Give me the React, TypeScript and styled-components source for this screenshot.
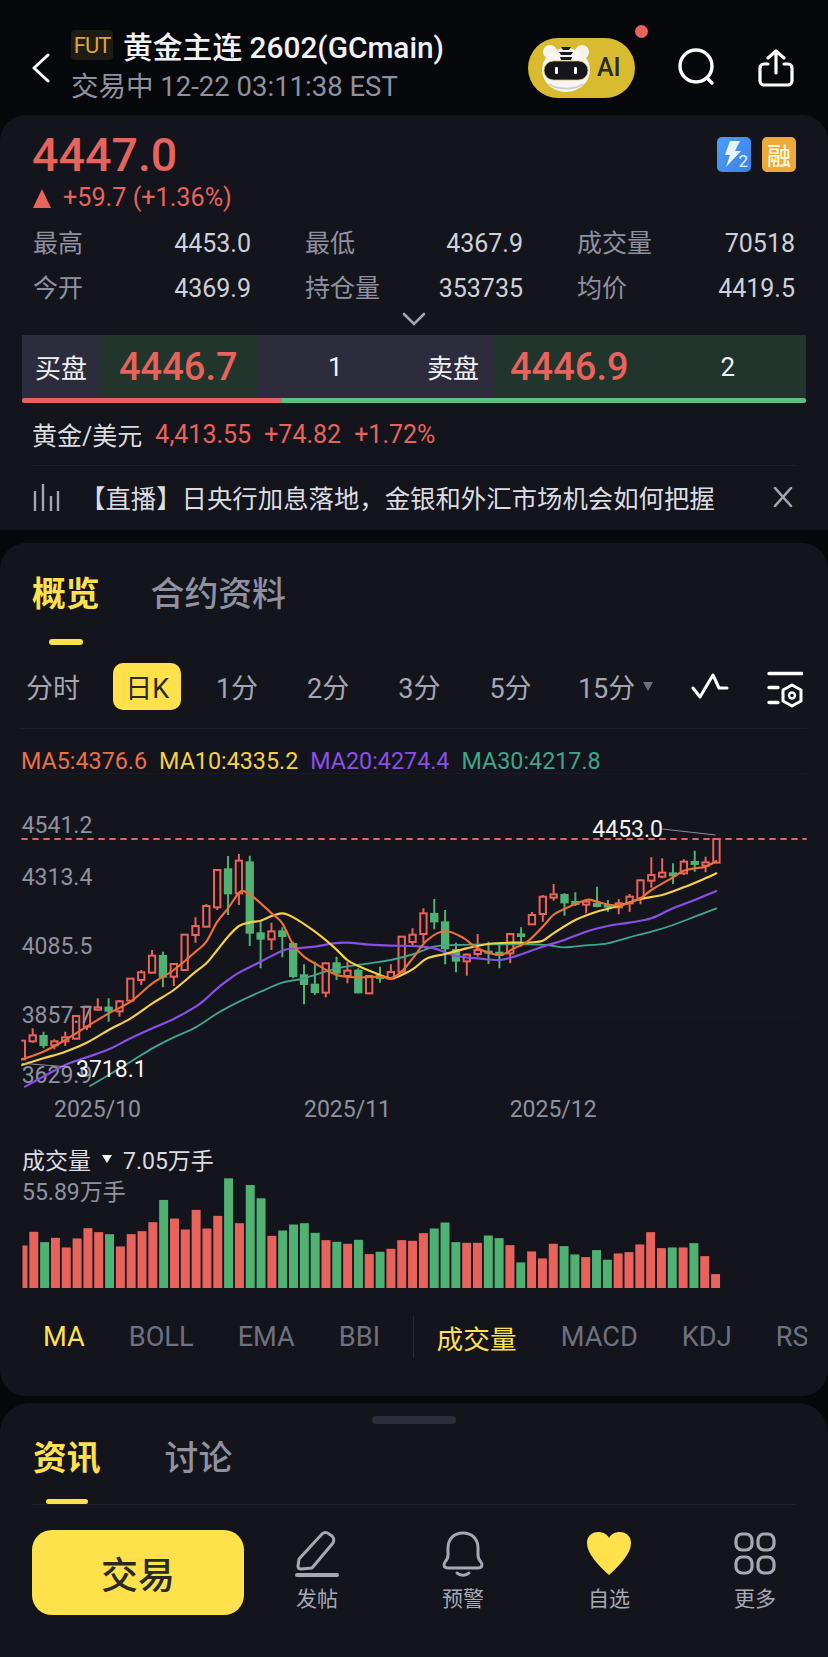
import React from "react";
import styled, { createGlobalStyle } from "styled-components";

const RED = "#e8635c";
const GREEN = "#4fb273";
const YELLOW = "#ffe14c";
const GREY = "#8f91a0";
const PANEL = "#14151c";
const FONT = 'Roboto, "Noto Sans CJK SC", sans-serif';

// chart data is kept in 3x pixels, the svg viewBox scales it back down
type Candle = [number, number, number, number, "r" | "g"];

const CANDLES: Candle[] = [
  [720, 780, 722, 778, "r"], [685, 728, 706, 724, "r"], [695, 745, 708, 735, "g"], [718, 748, 724, 736, "r"],
  [695, 738, 712, 724, "r"], [645, 718, 648, 716, "r"], [618, 690, 620, 680, "r"], [595, 632, 622, 629, "r"],
  [595, 665, 623, 632, "g"], [600, 650, 604, 634, "r"], [535, 605, 536, 602, "r"], [510, 555, 517, 540, "r"],
  [450, 520, 467, 518, "r"], [455, 562, 468, 530, "g"], [490, 558, 492, 530, "r"], [402, 512, 404, 510, "r"],
  [352, 428, 378, 405, "r"], [312, 382, 318, 380, "r"], [208, 330, 210, 322, "r"], [168, 345, 208, 280, "g"],
  [162, 315, 182, 280, "r"], [167, 438, 187, 398, "g"], [365, 505, 400, 416, "g"], [368, 450, 394, 418, "r"],
  [382, 472, 394, 408, "g"], [425, 535, 432, 528, "g"], [493, 613, 526, 552, "g"], [485, 585, 554, 576, "g"],
  [488, 592, 490, 578, "r"], [470, 540, 490, 518, "g"], [485, 550, 512, 528, "r"], [505, 580, 512, 577, "g"],
  [525, 582, 528, 580, "r"], [500, 548, 528, 534, "g"], [493, 538, 516, 536, "r"], [408, 520, 410, 515, "r"],
  [385, 440, 404, 426, "r"], [325, 430, 340, 402, "r"], [297, 388, 342, 364, "g"], [330, 493, 367, 445, "g"],
  [428, 517, 450, 482, "g"], [460, 527, 464, 484, "r"], [402, 470, 450, 462, "r"], [425, 492, 455, 458, "g"],
  [435, 505, 458, 465, "g"], [400, 490, 402, 460, "r"], [382, 440, 403, 408, "g"], [336, 375, 345, 373, "r"],
  [285, 365, 290, 342, "r"], [252, 302, 283, 293, "r"], [280, 347, 285, 307, "g"], [277, 318, 306, 312, "g"],
  [297, 340, 305, 314, "r"], [260, 322, 312, 318, "g"], [300, 335, 315, 320, "g"], [298, 343, 310, 322, "r"],
  [282, 335, 290, 310, "r"], [238, 313, 241, 295, "r"], [172, 263, 225, 242, "r"], [175, 235, 218, 230, "r"],
  [190, 252, 220, 226, "g"], [178, 225, 185, 220, "r"], [152, 215, 186, 192, "g"], [170, 217, 187, 197, "r"],
  [115, 190, 117, 188, "r"],
];

const VOLUME: [number, "r" | "g"][] = [
  [377, "r"], [336, "r"], [367, "g"], [354, "r"], [383, "r"], [356, "r"], [325, "r"], [337, "r"], [343, "g"],
  [380, "r"], [343, "r"], [334, "r"], [307, "r"], [240, "g"], [296, "r"], [329, "r"], [270, "r"], [326, "r"],
  [288, "r"], [175, "g"], [310, "r"], [195, "g"], [235, "g"], [348, "r"], [332, "g"], [314, "g"], [310, "g"],
  [339, "g"], [361, "r"], [366, "g"], [372, "r"], [360, "g"], [403, "r"], [396, "g"], [387, "r"], [361, "r"],
  [363, "r"], [340, "r"], [326, "g"], [308, "g"], [367, "g"], [369, "r"], [369, "r"], [347, "g"], [355, "g"],
  [376, "r"], [428, "g"], [395, "r"], [416, "r"], [372, "r"], [379, "g"], [404, "g"], [412, "r"], [391, "g"],
  [420, "g"], [401, "r"], [397, "r"], [374, "r"], [337, "r"], [385, "r"], [383, "g"], [383, "r"], [370, "g"],
  [409, "r"], [463, "r"],
];

const MA_LINES: { color: string; width: number; points: number[][] }[] = [
  {
    color: "#3fa58c",
    width: 5.5,
    points: [[270, 858], [326, 825], [392, 785], [457, 745], [521, 712], [587, 682], [652, 640], [717, 605], [782, 575], [847, 548], [912, 535], [1010, 505], [1107, 490], [1172, 480], [1242, 462], [1302, 440], [1368, 435], [1465, 433], [1582, 433], [1642, 435], [1693, 442], [1758, 436], [1823, 430], [1888, 412], [1954, 395], [2019, 375], [2084, 350], [2149, 325]],
  },
  {
    color: "#8a4fe8",
    width: 6.5,
    points: [[75, 860], [130, 830], [196, 795], [260, 772], [326, 748], [392, 715], [457, 685], [521, 657], [587, 620], [619, 595], [652, 565], [684, 540], [717, 518], [782, 485], [847, 452], [880, 446], [945, 440], [1000, 430], [1042, 428], [1107, 434], [1172, 437], [1242, 438], [1302, 445], [1368, 468], [1433, 475], [1498, 480], [1542, 470], [1628, 440], [1693, 420], [1758, 395], [1823, 378], [1888, 368], [1954, 355], [2019, 325], [2084, 300], [2149, 273]],
  },
  {
    color: "#f6d13f",
    width: 6.5,
    points: [[65, 795], [130, 775], [196, 755], [260, 728], [326, 690], [392, 655], [457, 610], [521, 570], [587, 515], [619, 490], [652, 450], [684, 410], [717, 378], [750, 367], [782, 362], [815, 348], [847, 340], [880, 352], [945, 395], [1000, 440], [1042, 480], [1075, 498], [1140, 525], [1172, 535], [1205, 525], [1242, 505], [1282, 475], [1335, 462], [1400, 445], [1465, 432], [1530, 428], [1582, 428], [1628, 422], [1660, 400], [1726, 360], [1790, 335], [1855, 318], [1921, 297], [1986, 285], [2051, 262], [2116, 235], [2149, 220]],
  },
  {
    color: "#ec6f35",
    width: 6.5,
    points: [[65, 778], [130, 755], [196, 720], [260, 680], [326, 640], [392, 605], [457, 550], [521, 510], [587, 455], [619, 425], [652, 365], [684, 325], [717, 278], [735, 275], [765, 295], [815, 340], [847, 370], [880, 435], [912, 470], [945, 490], [1010, 525], [1075, 532], [1140, 530], [1172, 535], [1205, 515], [1242, 470], [1282, 420], [1335, 393], [1392, 415], [1432, 445], [1498, 465], [1542, 445], [1582, 425], [1628, 380], [1660, 345], [1693, 327], [1758, 300], [1790, 305], [1832, 315], [1872, 313], [1921, 295], [1954, 270], [2019, 232], [2051, 212], [2084, 205], [2116, 200], [2149, 183]],
  },
];

// catmull-rom through the points
const smooth = (p: number[][]) => {
  let d = `M${p[0][0]} ${p[0][1]}`;
  for (let i = 0; i < p.length - 1; i++) {
    const a = p[Math.max(i - 1, 0)];
    const b = p[i];
    const c = p[i + 1];
    const e = p[Math.min(i + 2, p.length - 1)];
    d += `C${b[0] + (c[0] - a[0]) / 6} ${b[1] + (c[1] - a[1]) / 6} ${c[0] - (e[0] - b[0]) / 6} ${c[1] - (e[1] - b[1]) / 6} ${c[0]} ${c[1]}`;
  }
  return d;
};

const barX = (i: number) => 65.5 + 32.56 * i;

const GlobalStyle = createGlobalStyle`
  html, body {
    margin: 0;
    background: #07080b;
  }
  * {
    box-sizing: border-box;
  }
`;

const Page = styled.div`
  width: 828px;
  height: 1657px;
  overflow: hidden;
  background: #07080b;
  font-family: ${FONT};
  color: #fff;
`;

const Header = styled.header`
  position: relative;
  height: 115px;
  display: flex;
  align-items: center;
  padding: 20px 0 0 31px;
`;

const TitleBlock = styled.div`
  margin: -3px 0 0 20px;
  display: flex;
  flex-direction: column;
  gap: 6px;
`;

const TitleLine = styled.div`
  display: flex;
  align-items: center;
  gap: 10px;
  height: 36px;
  font-size: 29.8px;
  font-weight: 500;
  color: #f1f1f4;
  white-space: nowrap;
`;

const FutBadge = styled.span`
  width: 42px;
  height: 30px;
  border-radius: 4px;
  background: #1f1c13;
  color: #dba63e;
  font-size: 22px;
  font-weight: 400;
  letter-spacing: -1px;
  display: flex;
  align-items: center;
  justify-content: center;
`;

const SubLine = styled.div`
  font-size: 27.5px;
  line-height: 36px;
  color: ${GREY};
  white-space: nowrap;
`;

const HeaderActions = styled.div`
  margin-left: auto;
  display: flex;
  align-items: center;
  padding-right: 34px;
`;

const AiPill = styled.div`
  width: 107px;
  height: 60px;
  border-radius: 30px;
  background: #d8bb2f;
  display: flex;
  align-items: center;
  padding-left: 13px;
  gap: 2px;
  color: #2b2a22;
  font-size: 25px;
  font-weight: 500;
`;

const RedDot = styled.span`
  position: absolute;
  left: 635px;
  top: 25px;
  width: 13px;
  height: 13px;
  border-radius: 50%;
  background: ${RED};
`;

const SearchSlot = styled.div`
  margin-left: 43px;
  display: flex;
`;

const ShareSlot = styled.div`
  margin-left: 42px;
  display: flex;
`;

const QuotePanel = styled.section`
  height: 415px;
  background: ${PANEL};
  border-radius: 26px 26px 0 0;
  padding-top: 16px;
`;

const PriceRow = styled.div`
  display: flex;
  justify-content: space-between;
  padding: 0 32px 0 32px;
`;

const Price = styled.div`
  font-size: 46.6px;
  line-height: 48px;
  font-weight: 500;
  color: ${RED};
`;

const Badges = styled.div`
  display: flex;
  gap: 11px;
  margin-top: 6px;
`;

const MarginBadge = styled.span`
  width: 34px;
  height: 35px;
  border-radius: 5px;
  background: #eda93a;
  color: #fff6dc;
  font-size: 24px;
  font-weight: 500;
  display: flex;
  align-items: center;
  justify-content: center;
`;

const LevelBadge = styled.span`
  position: relative;
  width: 34px;
  height: 35px;
  border-radius: 5px;
  background: linear-gradient(135deg, #4aa0f5, #3f7fe8);
  display: flex;
`;

const LevelNumber = styled.span`
  position: absolute;
  right: 3px;
  bottom: 1px;
  font-size: 17px;
  color: #e8f3ff;
`;

const ChangeRow = styled.div`
  margin: 4px 0 0 33px;
  display: flex;
  align-items: center;
  gap: 12px;
  font-size: 25.2px;
  line-height: 30px;
  color: ${RED};
`;

const UpTriangle = styled.span`
  width: 0;
  height: 0;
  border-left: 9px solid transparent;
  border-right: 9px solid transparent;
  border-bottom: 19px solid ${RED};
`;

const StatsGrid = styled.div`
  margin: 13px 0 0 33px;
  width: 762px;
  display: grid;
  grid-template-columns: repeat(3, 218px);
  column-gap: 54px;
  row-gap: 9px;
`;

const Stat = styled.div`
  display: flex;
  justify-content: space-between;
  font-size: 25px;
  line-height: 36px;
`;

const StatLabel = styled.span`
  color: ${GREY};
`;

const StatValue = styled.span`
  color: #cfd0d8;
`;

const Expand = styled.div`
  height: 28px;
  padding-top: 5px;
  display: flex;
  justify-content: center;
  align-items: flex-start;
`;

const BidBox = styled.div`
  margin: 0 22px;
`;

const BidRow = styled.div`
  height: 63px;
  display: grid;
  grid-template-columns: 78px 158px 235px 313px;
  align-items: stretch;
  font-size: 26px;
`;

const BidCell = styled.div<{ $tone: "purple" | "green"; $center?: boolean }>`
  display: flex;
  align-items: center;
  justify-content: ${(p) => (p.$center ? "center" : "flex-start")};
  background: ${(p) => (p.$tone === "purple" ? "#2c2c3c" : "#22352d")};
  color: #f1f1f4;
`;

const BidPrice = styled.span<{ $inset: number }>`
  margin-left: ${(p) => p.$inset}px;
  font-size: 38px;
  font-weight: 500;
  color: ${RED};
`;

const SideCount = styled.span<{ $inset: number }>`
  margin-left: ${(p) => p.$inset}px;
  width: 14px;
`;

const AskLabel = styled.span`
  margin-left: 85px;
`;

const SplitBar = styled.div`
  height: 5px;
  display: flex;
  border-radius: 2px;
  overflow: hidden;
`;

const SplitPart = styled.div<{ $color: string; $grow: number }>`
  background: ${(p) => p.$color};
  flex: ${(p) => p.$grow} 0 0;
`;

const SpotRow = styled.div`
  margin: 0 32px;
  height: 63px;
  display: flex;
  align-items: center;
  border-bottom: 1px solid #1f2029;
  color: ${RED};
  font-size: 25px;
  gap: 13px;
`;

const SpotName = styled.span`
  color: #dcdce2;
`;

const NewsRow = styled.div`
  margin: 0 32px;
  height: 64px;
  padding-bottom: 3px;
  display: flex;
  align-items: center;
`;

const NewsText = styled.div`
  margin-left: 20px;
  font-size: 25.4px;
  color: #dcdce2;
  white-space: nowrap;
`;

const NewsClose = styled.div`
  margin-left: auto;
  margin-right: 3px;
  display: flex;
`;

const ChartPanel = styled.section`
  margin-top: 13px;
  height: 853px;
  background: ${PANEL};
  border-radius: 26px;
`;

const TabRow = styled.div<{ $gap: number }>`
  display: flex;
  gap: ${(p) => p.$gap}px;
  padding-left: 32px;
`;

const Tab = styled.div<{ $active?: boolean }>`
  font-size: 33.8px;
  line-height: 50px;
  font-weight: ${(p) => (p.$active ? 700 : 500)};
  color: ${(p) => (p.$active ? YELLOW : GREY)};
`;

const TabStack = styled.div`
  display: flex;
  flex-direction: column;
  align-items: center;
`;

const TabMark = styled.span<{ $width: number; $gap: number }>`
  width: ${(p) => p.$width}px;
  height: 6px;
  border-radius: 3px;
  background: ${YELLOW};
  margin-top: ${(p) => p.$gap}px;
`;

const OverviewTabs = styled(TabRow)`
  height: 102px;
  padding-top: 27px;
`;

const PeriodRow = styled.div`
  height: 83px;
  margin: 0 26px 0 9px;
  display: grid;
  grid-template-columns: repeat(6, 91.2px) 120px 1fr 34px;
  align-items: center;
  justify-items: center;
  font-size: 27px;
  color: #a4a6b3;
  white-space: nowrap;
`;

const PeriodFirst = styled.span`
  margin-right: 3px;
`;

const PeriodOn = styled.span`
  width: 68px;
  height: 47px;
  border-radius: 10px;
  background: ${YELLOW};
  color: #2b2a22;
  display: flex;
  align-items: center;
  justify-content: center;
  margin-left: 3px;
`;

const PeriodMore = styled.span`
  display: flex;
  align-items: center;
  gap: 8px;
  margin-left: -1px;
`;

const WaveSlot = styled.span`
  display: flex;
  margin-right: 25px;
`;

const PeriodRule = styled.div`
  height: 1px;
  margin: 0 21px;
  background: #1f2029;
`;

const TinyDown = styled.span<{ $color: string; $w: number; $h: number }>`
  width: 0;
  height: 0;
  border-left: ${(p) => p.$w}px solid transparent;
  border-right: ${(p) => p.$w}px solid transparent;
  border-top: ${(p) => p.$h}px solid ${(p) => p.$color};
`;

const MaRow = styled.div`
  margin: 0 21px;
  height: 45px;
  padding-top: 20px;
  display: flex;
  gap: 12px;
  align-items: center;
  font-size: 23.3px;
  line-height: 24px;
  border-bottom: 1px solid #1a1b23;
`;

const MaValue = styled.span<{ $color: string }>`
  color: ${(p) => p.$color};
`;

const KlineSvg = styled.svg`
  display: block;
  margin-top: 6px;
`;

const VolumeArea = styled.div`
  position: relative;
  margin-top: 16px;
`;

const VolumeTitle = styled.div`
  height: 30px;
  padding-left: 22px;
  display: flex;
  align-items: center;
  font-size: 23px;
  color: #dcdce2;
`;

const VolumeMark = styled.span`
  margin: 0 11px;
  display: flex;
`;

const VolumeMax = styled.div`
  position: absolute;
  left: 22px;
  top: 34px;
  font-size: 23px;
  line-height: 30px;
  color: ${GREY};
`;

const VolumeSvg = styled.svg`
  display: block;
`;

const IndicatorRow = styled.div`
  height: 98px;
  margin-right: 21px;
  padding-left: 43px;
  display: flex;
  align-items: center;
  gap: 44px;
  overflow: hidden;
  font-size: 27.2px;
  color: #6f7180;
  white-space: nowrap;
`;

const IndicatorOn = styled.span`
  color: ${YELLOW};
`;

const IndicatorCjk = styled(IndicatorOn)`
  font-size: 26.7px;
`;

const IndicatorSplit = styled.span`
  width: 1px;
  height: 42px;
  background: #2a2b35;
  margin: 0 -21.5px 0 -11px;
  flex: none;
`;

const SheetPanel = styled.section`
  margin-top: 7px;
  height: 254px;
  background: ${PANEL};
  border-radius: 30px 30px 0 0;
  padding-top: 13px;
`;

const Handle = styled.div`
  width: 84px;
  height: 8px;
  margin: 0 auto;
  border-radius: 4px;
  background: #2c2d3a;
`;

const NewsTabs = styled(TabRow)`
  margin: 0 32px;
  padding-left: 1px;
  padding-top: 10px;
  height: 81px;
  border-bottom: 1px solid #20212a;
`;

const BottomBar = styled.div`
  margin-top: 25px;
  padding-left: 32px;
  display: flex;
`;

const TradeButton = styled.div`
  width: 212px;
  height: 85px;
  border-radius: 20px;
  background: ${YELLOW};
  color: #2b2a22;
  font-size: 37px;
  font-weight: 500;
  display: flex;
  align-items: center;
  justify-content: center;
`;

const NavItem = styled.div`
  width: 146px;
  display: flex;
  flex-direction: column;
  align-items: center;
  font-size: 21px;
  line-height: 28px;
  color: #a6a8b5;
`;

const NavIcon = styled.svg`
  display: block;
  margin-top: 1px;
  margin-bottom: 8px;
`;

const BackIcon = () => (
  <svg width="20" height="30" viewBox="0 0 20 30" fill="none">
    <path d="M17 2 3 15l14 13" stroke="#fff" strokeWidth="3" strokeLinecap="round" strokeLinejoin="round" />
  </svg>
);

const Mascot = () => (
  <svg width="54" height="54" viewBox="0 0 54 54">
    <circle cx="9" cy="11" r="7" fill="#f6f3ee" />
    <circle cx="41" cy="11" r="7" fill="#f6f3ee" />
    <ellipse cx="25" cy="29" rx="24" ry="22" fill="#f8f6f2" />
    <path d="M20 6h10l-2 3h-6zM18 11h14l-2 3H20zM19 16h12l-1 3H20z" fill="#1b1b20" />
    <rect x="3" y="20" width="44" height="19" rx="9.5" fill="#15151b" stroke="#cdbb55" strokeWidth="0.8" />
    <rect x="14" y="26" width="3" height="7" rx="1.2" fill="#fff" />
    <rect x="33" y="26" width="3" height="7" rx="1.2" fill="#fff" />
    <path d="M8 43c8 6 26 6 34 0" fill="none" stroke="#cfcfd6" strokeWidth="2" />
  </svg>
);

const SearchIcon = () => (
  <svg width="38" height="40" viewBox="0 0 38 40" fill="none" stroke="#fff" strokeWidth="3.4" strokeLinecap="round">
    <circle cx="18" cy="18" r="16" />
    <path d="m29 30 5 5" />
  </svg>
);

const ShareIcon = () => (
  <svg width="36" height="38" viewBox="0 0 36 38" fill="none" stroke="#fff" strokeWidth="3.2" strokeLinecap="round" strokeLinejoin="round">
    <path d="M10 15H6a4 4 0 0 0-4 4v13a4 4 0 0 0 4 4h24a4 4 0 0 0 4-4V19a4 4 0 0 0-4-4h-4" />
    <path d="M18 24V2M10 9l8-7 8 7" />
  </svg>
);

const BoltIcon = () => (
  <svg width="34" height="35" viewBox="0 0 34 35">
    <path d="M13 4h10l-5 10h6L9 30l4-12H8z" fill="#eaf4ff" />
  </svg>
);

const ChevronDown = () => (
  <svg width="24" height="14" viewBox="0 0 24 14" fill="none">
    <path d="m2 2 10 10L22 2" stroke="#a4a6b3" strokeWidth="2.6" strokeLinecap="round" />
  </svg>
);

const LiveBars = () => (
  <svg width="28" height="28" viewBox="0 0 28 28" stroke="#a4a6b3" strokeWidth="2.4">
    <path d="M3 8v20M11 1v27M19 13v15M26 8v20" />
  </svg>
);

const CloseIcon = () => (
  <svg width="20" height="20" viewBox="0 0 20 20" stroke="#a4a6b3" strokeWidth="2.6" strokeLinecap="round">
    <path d="m2 1 16 18M18 1 2 19" />
  </svg>
);

const WaveIcon = () => (
  <svg width="38" height="28" viewBox="0 0 38 28" fill="none" stroke="#fff" strokeWidth="3" strokeLinecap="round" strokeLinejoin="round">
    <path d="m2 15 7 9 13-22 6 13h8" />
  </svg>
);

const SettingIcon = () => (
  <svg width="36" height="44" viewBox="0 0 36 44" fill="none" stroke="#fff" strokeWidth="3.4" strokeLinecap="round">
    <path d="M2 8.5h33M2 22.5h9M2 37.5h9" />
    <path d="m25 20 9 5v11l-9 5-9-5V25z" strokeWidth="3" strokeLinejoin="round" />
    <circle cx="25" cy="30.5" r="3" strokeWidth="2.4" />
  </svg>
);

const KlineChart = () => (
  <KlineSvg width="828" height="348" viewBox="0 -60 2484 1044" fontFamily={FONT} fontSize="69">
    <defs>
      <clipPath id="plot">
        <rect x="64" y="-60" width="2420" height="925" />
      </clipPath>
    </defs>
    <path d="M64 230H2420M64 445H2420M64 650H2420" stroke="#1b1c24" strokeWidth="2" strokeDasharray="14 10" />
    <path d="M64 117H2420" stroke={RED} strokeWidth="5.5" strokeDasharray="19 14" />
    <g clipPath="url(#plot)">
      {CANDLES.map(([hi, lo, top, bottom, side], i) => {
        const x = barX(i);
        const color = side === "r" ? RED : GREEN;
        const filled = side === "g";
        return (
          <g key={i} stroke={color} strokeWidth="6">
            <path d={`M${x} ${hi}V${top}M${x} ${bottom}V${lo}`} fill="none" />
            <rect
              x={x - 9.5}
              y={top}
              width={19}
              height={bottom - top}
              fill={filled ? color : "none"}
            />
          </g>
        );
      })}
    </g>
    <text x="65" y="98" fill={GREY}>4541.2</text>
    <text x="65" y="256" fill={GREY}>4313.4</text>
    <text x="65" y="462" fill={GREY}>4085.5</text>
    <text x="65" y="670" fill={GREY}>3857.7</text>
    <text x="65" y="848" fill={GREY}>3629.9</text>
    <g clipPath="url(#plot)">
      {MA_LINES.map((line) => (
        <path key={line.color} d={smooth(line.points)} fill="none" stroke={line.color} strokeWidth={line.width} strokeLinecap="round" />
      ))}
    </g>
    <path d="M65 790 210 801" stroke="#a4a6b3" strokeWidth="2.5" />
    <text x="228" y="830" fill="#f4f4f6">3718.1</text>
    <text x="1777" y="112" fill="#f4f4f6">4453.0</text>
    <path d="M1987 87 2147 105" stroke="#a4a6b3" strokeWidth="2.5" />
    <text x="162" y="950" fill={GREY}>2025/10</text>
    <text x="912" y="950" fill={GREY}>2025/11</text>
    <text x="1529" y="950" fill={GREY}>2025/12</text>
  </KlineSvg>
);

const VolumeBars = () => (
  <VolumeSvg width="828" height="114" viewBox="0 162 2484 343">
    <defs>
      <clipPath id="vol">
        <rect x="64" y="162" width="2420" height="343" />
      </clipPath>
    </defs>
    <g clipPath="url(#vol)">
      {VOLUME.map(([top, side], i) => (
        <rect key={i} x={barX(i) - 13.5} y={top} width={27} height={505 - top} fill={side === "r" ? RED : GREEN} />
      ))}
    </g>
  </VolumeSvg>
);

const STATS = [
  ["最高", "4453.0"],
  ["最低", "4367.9"],
  ["成交量", "70518"],
  ["今开", "4369.9"],
  ["持仓量", "353735"],
  ["均价", "4419.5"],
];

const MA_VALUES = [
  ["MA5:4376.6", "#ec6f45"],
  ["MA10:4335.2", "#f6d13f"],
  ["MA20:4274.4", "#8a4fe8"],
  ["MA30:4217.8", "#3fa58c"],
];

export default function App() {
  return (
    <Page>
      <GlobalStyle />
      <Header>
        <BackIcon />
        <TitleBlock>
          <TitleLine>
            <FutBadge>FUT</FutBadge>
            黄金主连 2602(GCmain)
          </TitleLine>
          <SubLine>交易中 12-22 03:11:38 EST</SubLine>
        </TitleBlock>
        <HeaderActions>
          <AiPill>
            <Mascot />
            AI
          </AiPill>
          <RedDot />
          <SearchSlot>
            <SearchIcon />
          </SearchSlot>
          <ShareSlot>
            <ShareIcon />
          </ShareSlot>
        </HeaderActions>
      </Header>

      <QuotePanel>
        <PriceRow>
          <Price>4447.0</Price>
          <Badges>
            <LevelBadge>
              <BoltIcon />
              <LevelNumber>2</LevelNumber>
            </LevelBadge>
            <MarginBadge>融</MarginBadge>
          </Badges>
        </PriceRow>
        <ChangeRow>
          <UpTriangle />
          +59.7 (+1.36%)
        </ChangeRow>
        <StatsGrid>
          {STATS.map(([label, value]) => (
            <Stat key={label}>
              <StatLabel>{label}</StatLabel>
              <StatValue>{value}</StatValue>
            </Stat>
          ))}
        </StatsGrid>
        <Expand>
          <ChevronDown />
        </Expand>
        <BidBox>
          <BidRow>
            <BidCell $tone="purple" $center>买盘</BidCell>
            <BidCell $tone="green">
              <BidPrice $inset={19}>4446.7</BidPrice>
            </BidCell>
            <BidCell $tone="purple">
              <SideCount $inset={70}>1</SideCount>
              <AskLabel>卖盘</AskLabel>
            </BidCell>
            <BidCell $tone="green">
              <BidPrice $inset={17}>4446.9</BidPrice>
              <SideCount $inset={92}>2</SideCount>
            </BidCell>
          </BidRow>
          <SplitBar>
            <SplitPart $color={RED} $grow={260} />
            <SplitPart $color="#5cc07f" $grow={524} />
          </SplitBar>
        </BidBox>
        <SpotRow>
          <SpotName>黄金/美元</SpotName>
          <span>4,413.55</span>
          <span>+74.82</span>
          <span>+1.72%</span>
        </SpotRow>
        <NewsRow>
          <LiveBars />
          <NewsText>【直播】日央行加息落地，金银和外汇市场机会如何把握</NewsText>
          <NewsClose>
            <CloseIcon />
          </NewsClose>
        </NewsRow>
      </QuotePanel>

      <ChartPanel>
        <OverviewTabs $gap={51}>
          <TabStack>
            <Tab $active>概览</Tab>
            <TabMark $width={34} $gap={19} />
          </TabStack>
          <Tab>合约资料</Tab>
        </OverviewTabs>
        <PeriodRow>
          <PeriodFirst>分时</PeriodFirst>
          <PeriodOn>日K</PeriodOn>
          <span>1分</span>
          <span>2分</span>
          <span>3分</span>
          <span>5分</span>
          <PeriodMore>
            15分
            <TinyDown $color="#6f7180" $w={5} $h={9} />
          </PeriodMore>
          <WaveSlot>
            <WaveIcon />
          </WaveSlot>
          <SettingIcon />
        </PeriodRow>
        <PeriodRule />
        <MaRow>
          {MA_VALUES.map(([text, color]) => (
            <MaValue key={text} $color={color}>
              {text}
            </MaValue>
          ))}
        </MaRow>
        <KlineChart />
        <VolumeArea>
          <VolumeTitle>
            成交量
            <VolumeMark>
              <TinyDown $color="#f1f1f4" $w={5} $h={8} />
            </VolumeMark>
            7.05万手
          </VolumeTitle>
          <VolumeMax>55.89万手</VolumeMax>
          <VolumeBars />
        </VolumeArea>
        <IndicatorRow>
          <IndicatorOn>MA</IndicatorOn>
          <span>BOLL</span>
          <span>EMA</span>
          <span>BBI</span>
          <IndicatorSplit />
          <IndicatorCjk>成交量</IndicatorCjk>
          <span>MACD</span>
          <span>KDJ</span>
          <span>RSI</span>
        </IndicatorRow>
      </ChartPanel>

      <SheetPanel>
        <Handle />
        <NewsTabs $gap={64}>
          <TabStack>
            <Tab $active>资讯</Tab>
            <TabMark $width={42} $gap={15} />
          </TabStack>
          <Tab>讨论</Tab>
        </NewsTabs>
        <BottomBar>
          <TradeButton>交易</TradeButton>
          <NavItem>
            <NavIcon width="44" height="46" viewBox="0 0 44 46" fill="none" stroke="#a6a8b5" strokeWidth="3" strokeLinejoin="round" strokeLinecap="round">
              <path d="M4 28 27 3c2-2 5-2 7 0l3 2c2 2 2 5 1 7L17 37l-11 1c-2 0-3-1-3-3z" />
              <path d="M2 44h40" strokeWidth="4" />
            </NavIcon>
            发帖
          </NavItem>
          <NavItem>
            <NavIcon width="44" height="46" viewBox="0 0 44 46" fill="none" stroke="#a6a8b5" strokeWidth="3" strokeLinecap="round" strokeLinejoin="round">
              <path d="M7 24V17C7 8 13 2 22 2s15 6 15 15v7c0 3 1 5 3 7 2 3 1 6-3 6H7c-4 0-5-3-3-6 2-2 3-4 3-7z" />
              <path d="M16 42c3 3 9 3 12 0" />
            </NavIcon>
            预警
          </NavItem>
          <NavItem>
            <NavIcon width="46" height="46" viewBox="0 0 46 46">
              <path d="M23 44C13 35 1 23 1 12 1 5 6 1 12 1c5 0 9 2 11 6 2-4 6-6 11-6 6 0 11 4 11 11 0 11-12 23-22 32z" fill={YELLOW} />
            </NavIcon>
            自选
          </NavItem>
          <NavItem>
            <NavIcon width="44" height="46" viewBox="0 0 44 46" fill="none" stroke="#a6a8b5" strokeWidth="3.2">
              <rect x="3" y="3" width="16" height="16" rx="6" />
              <rect x="25" y="3" width="16" height="16" rx="6" />
              <rect x="3" y="26" width="16" height="16" rx="6" />
              <rect x="25" y="26" width="16" height="16" rx="6" />
            </NavIcon>
            更多
          </NavItem>
        </BottomBar>
      </SheetPanel>
    </Page>
  );
}
